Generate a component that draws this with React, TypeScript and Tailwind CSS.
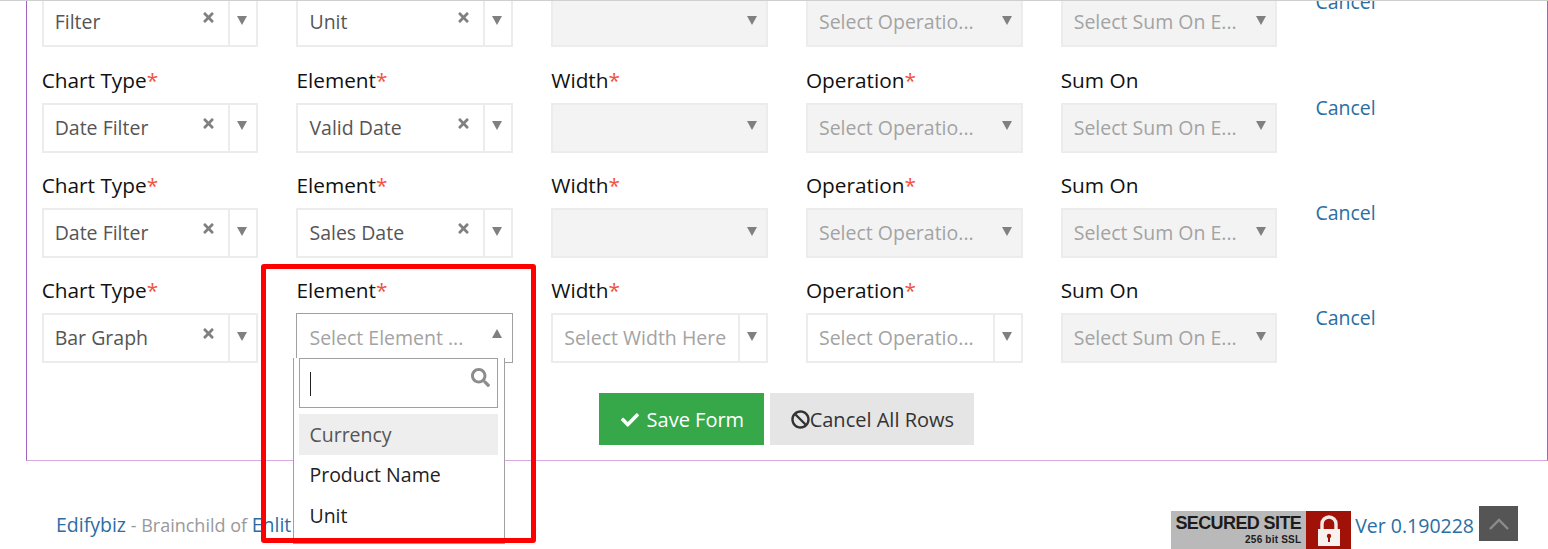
import React from "react";
import { FaBan, FaCheck, FaSearch, FaTimes } from "react-icons/fa";

type SelectProps = { value?: string; placeholder?: string; disabled?: boolean; clear?: boolean; divider?: boolean };

function Triangle({ up = false }: { up?: boolean }) {
  return (
    <svg width="10" height="9" viewBox="0 0 10 9" className="block">
      <path d={up ? "M5 0 10 9H0z" : "M0 0h10L5 9z"} fill="#808080" />
    </svg>
  );
}

function Select({ value, placeholder, disabled, clear, divider }: SelectProps) {
  return (
    <div className={`relative h-[50px] w-full border-2 border-[#ececec] ${disabled ? "bg-[#f3f3f3]" : "bg-white"}`}>
      <div className={`flex h-full items-center pl-[11px] text-[19.5px] whitespace-nowrap ${value ? "text-[#555555]" : "text-[#a3a3a3]"}`}>
        {value || placeholder}
      </div>
      {clear && <FaTimes className="absolute right-[41px] top-[11px] h-[15px] w-[13px] text-[#808080]" />}
      {divider && <span className="absolute right-[26px] top-0 h-full w-[2px] bg-[#ececec]" />}
      <span className="absolute right-[9px] top-[16.5px]">
        <Triangle />
      </span>
    </div>
  );
}

function Label({ text, required }: { text: string; required?: boolean }) {
  return (
    <div className="flex h-[55.3px] items-end pb-[9px]">
      <span className="h-[28px] text-[20.8px] leading-[28px] text-[#111111]">
        {text}
        {required && <span className="text-[#f4513c]">*</span>}
      </span>
    </div>
  );
}

function Column({ children }: { children: React.ReactNode }) {
  return <div className="w-[254.75px] shrink-0 pr-[38px]">{children}</div>;
}

function CancelLink() {
  return <a className="mt-[46.2px] h-[28px] text-[19.5px] leading-[28px] text-[#2a6ea3]">Cancel</a>;
}

function FirstRow() {
  return (
    <div className="flex h-[50px]">
      <Column>
        <Select value="Filter" clear divider />
      </Column>
      <Column>
        <Select value="Unit" clear divider />
      </Column>
      <Column>
        <Select disabled />
      </Column>
      <Column>
        <Select disabled placeholder="Select Operatio..." />
      </Column>
      <Column>
        <Select disabled placeholder="Select Sum On E..." />
      </Column>
      <a className="mt-[-9.1px] h-[28px] text-[19.5px] leading-[28px] text-[#2a6ea3]">Cancel</a>
    </div>
  );
}

function Row({ type, element }: { type: string; element: string }) {
  return (
    <div className="flex h-[105.3px]">
      <Column>
        <Label text="Chart Type" required />
        <Select value={type} clear divider />
      </Column>
      <Column>
        <Label text="Element" required />
        <Select value={element} clear divider />
      </Column>
      <Column>
        <Label text="Width" required />
        <Select disabled />
      </Column>
      <Column>
        <Label text="Operation" required />
        <Select disabled placeholder="Select Operatio..." />
      </Column>
      <Column>
        <Label text="Sum On" />
        <Select disabled placeholder="Select Sum On E..." />
      </Column>
      <CancelLink />
    </div>
  );
}

function OpenSelect() {
  return (
    <div className="relative h-[50px] w-full border border-[#a0a0a0] bg-white">
      <div className="flex h-full items-center pl-[12px] text-[19.5px] whitespace-nowrap text-[#a3a3a3]">Select Element ...</div>
      <span className="absolute right-[10px] top-[15px]">
        <Triangle up />
      </span>
      <div className="absolute left-[-4px] top-[44px] z-10 h-[186px] w-[212px] border border-t-0 border-[#a0a0a0] bg-white pl-[5px] pr-[6px] text-[19.5px]">
        <div className="relative h-[50px] w-full border border-[#a0a0a0] bg-white">
          <span className="absolute left-[10px] top-[13px] h-[24px] w-[1px] bg-[#222222]" />
          <FaSearch className="absolute right-[7px] top-[9px] h-[19px] w-[19px] text-[#8c8c8c]" />
        </div>
        <div className="mt-[6px] flex h-[41px] items-center bg-[#eeeeee] pl-[10px] text-[#555555]">Currency</div>
        <div className="flex h-[40px] items-center pl-[10px] text-[#222222]">Product Name</div>
        <div className="flex h-[41px] items-center pl-[10px] text-[#222222]">Unit</div>
      </div>
    </div>
  );
}

function LastRow() {
  return (
    <div className="flex h-[105.3px]">
      <Column>
        <Label text="Chart Type" required />
        <Select value="Bar Graph" clear divider />
      </Column>
      <Column>
        <Label text="Element" required />
        <OpenSelect />
      </Column>
      <Column>
        <Label text="Width" required />
        <Select placeholder="Select Width Here" divider />
      </Column>
      <Column>
        <Label text="Operation" required />
        <Select placeholder="Select Operatio..." divider />
      </Column>
      <Column>
        <Label text="Sum On" />
        <Select disabled placeholder="Select Sum On E..." />
      </Column>
      <CancelLink />
    </div>
  );
}

function Badge() {
  return (
    <div className="flex h-[38px] w-[180px]">
      <div className="flex w-[135px] flex-col items-end bg-[#b9b9b9] pr-[5px] pt-[2px] font-['Liberation_Sans',sans-serif] font-bold text-[#1c1c1c]">
        <span className="text-[18px] leading-[20px] tracking-[-0.6px]">SECURED SITE</span>
        <span className="text-[10px] leading-[14px] tracking-[0.2px]">256 bit SSL</span>
      </div>
      <div className="flex w-[45px] items-center justify-center bg-[#a01208]">
        <svg width="24" height="33" viewBox="0 0 24 33">
          <path d="M5 16V10a7 7 0 0 1 14 0v6" fill="none" stroke="#f2e9e6" strokeWidth="3.4" />
          <rect x="1" y="15" width="22" height="17" fill="#f7f2f0" />
          <circle cx="12" cy="22" r="2.2" fill="#a01208" />
          <rect x="11" y="22" width="2" height="6" fill="#a01208" />
        </svg>
      </div>
    </div>
  );
}

export default function App() {
  return (
    <div className="relative h-[549px] w-[1548px] overflow-hidden bg-white font-['Open_Sans',sans-serif] text-[20px] leading-[28px]">
      <div className="absolute inset-x-0 top-0 z-10 h-px bg-[#cfcfcf]" />
      <div className="ml-[26px] mt-px flow-root h-[460px] border-x border-b border-x-[#a262c4] border-b-[#d9a9e2] pl-[14.7px]">
        <div className="mt-[-3.6px]">
          <FirstRow />
          <Row type="Date Filter" element="Valid Date" />
          <Row type="Date Filter" element="Sales Date" />
          <LastRow />
          <div className="ml-[-15px] mt-[30px] flex justify-center gap-[6px]">
            <button className="flex h-[52px] w-[165px] items-center justify-center gap-[7px] bg-[#37a84a] pt-[1px] text-white">
              <FaCheck className="h-[18px] w-[20px]" />
              Save Form
            </button>
            <button className="flex h-[52px] w-[204px] items-center justify-center bg-[#e5e5e5] pt-[1px] text-[#333333]">
              <FaBan className="h-[19px] w-[19px]" />
              Cancel All Rows
            </button>
          </div>
        </div>
      </div>
      <div className="mt-[45px] flex items-start justify-between pl-[56px] pr-[30px]">
        <div className="mt-[5px] whitespace-nowrap text-[18px]">
          <span className="text-[19.5px] text-[#2a6ea3]">Edifybiz</span>
          <span className="text-[#999999]"> - Brainchild of </span>
          <span className="text-[19.5px] text-[#2a6ea3]">Enlit</span>
        </div>
        <div className="flex items-start">
          <div className="mt-[5px]">
            <Badge />
          </div>
          <span className="ml-[4px] mt-[6px] text-[19.5px] text-[#2a6ea3]">Ver 0.190228</span>
          <div className="ml-[5px] flex h-[35px] w-[39px] items-center justify-center bg-[#555555]">
            <svg width="22" height="14" viewBox="0 0 22 14">
              <path d="M2 12 11 3l9 9" fill="none" stroke="#8c8c8c" strokeWidth="2.4" />
            </svg>
          </div>
        </div>
      </div>
      <div className="pointer-events-none absolute left-[261px] top-[264px] z-20 h-[279px] w-[275px] rounded-[3px] border-[5px] border-[#ff0000]" />
    </div>
  );
}
